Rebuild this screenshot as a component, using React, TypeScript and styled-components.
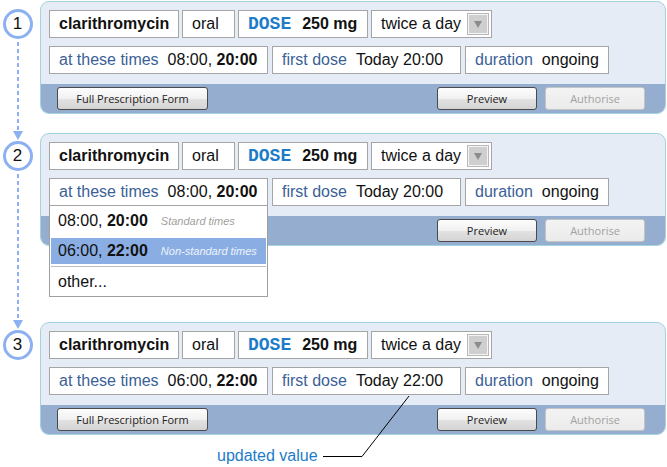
import React from 'react';
import styled, { createGlobalStyle } from 'styled-components';

const GlobalStyle = createGlobalStyle`
  html, body { margin: 0; padding: 0; background: #ffffff; }
  body { font-family: "Liberation Sans", Arial, sans-serif; color: #111111; }
`;

const BLUE_RAIL = '#8cb0f2';

const Page = styled.div`
  width: 667px;
  height: 467px;
  box-sizing: border-box;
  padding: 1px 1px 0 2px;
  display: flex;
  flex-direction: column;
  overflow: hidden;
`;

const Step = styled.section`
  display: flex;
  gap: 7px;
`;

const Rail = styled.div`
  width: 31px;
  flex: none;
  display: flex;
  flex-direction: column;
  align-items: center;
`;

const ArrowSeg = styled.div`
  height: 8px;
  width: 12px;
  flex: none;
  display: flex;
  justify-content: center;
  align-items: flex-end;
  overflow: visible;
`;

const ArrowSvg = styled.svg`
  display: block;
  margin-top: -3px;
  flex: none;
`;

const Circle = styled.div`
  width: 30px;
  height: 30px;
  flex: none;
  box-sizing: border-box;
  border: 3px solid ${BLUE_RAIL};
  border-radius: 50%;
  display: flex;
  align-items: center;
  justify-content: center;
  font-size: 17px;
  color: #111;
`;

const Connector = styled.div`
  flex: 1;
  width: 2px;
  margin-top: 3px;
  background: repeating-linear-gradient(to bottom, ${BLUE_RAIL} 0 4px, transparent 4px 7px);
`;

const Panel = styled.div<{ $after: number }>`
  width: 626px;
  box-sizing: border-box;
  border: 1px solid #a3d3e0;
  border-radius: 9px;
  background: #e5ecf6;
  display: flex;
  flex-direction: column;
  margin-bottom: ${(p) => p.$after}px;
  align-self: flex-start;
`;

const Body = styled.div`
  padding: 8px 8px 10px;
  display: flex;
  flex-direction: column;
  gap: 8px;
`;

const Row = styled.div<{ $gap: number }>`
  display: flex;
  gap: ${(p) => p.$gap}px;
`;

const Field = styled.div<{ $w: number }>`
  position: relative;
  width: ${(p) => p.$w}px;
  height: 28px;
  flex: none;
  box-sizing: border-box;
  background: #ffffff;
  border: 1px solid #a5a5a5;
  display: flex;
  align-items: center;
  padding: 0 9px;
  font-size: 16px;
  white-space: nowrap;
`;

const SelectField = styled(Field)`
  padding-right: 2px;
`;

const SelectBtn = styled.span`
  margin-left: auto;
  width: 22px;
  height: 22px;
  box-sizing: border-box;
  border: 1px solid #b8b8b8;
  box-shadow: inset 0 0 0 1px #f4f4f4;
  background: #cfcfcf;
  display: flex;
  align-items: center;
  justify-content: center;
`;

const Caret = styled.span`
  width: 0;
  height: 0;
  border-left: 4px solid transparent;
  border-right: 4px solid transparent;
  border-top: 7px solid #8c8c8c;
  margin-top: 1px;
`;

const Label = styled.span`
  color: #3b5f97;
  margin-right: 9px;
`;

const Dose = styled.span`
  font-family: "Liberation Mono", "Courier New", monospace;
  font-weight: bold;
  font-size: 18px;
  color: #1c7cc9;
  margin-right: 11px;
`;

const Strong = styled.b`
  font-weight: bold;
`;

const Bar = styled.div`
  height: 29px;
  background: #95adcf;
  border-radius: 0 0 8px 8px;
  display: flex;
  align-items: center;
  gap: 8px;
  padding: 0 20px 0 16px;
`;

const Btn = styled.button<{ $w: number; $push?: boolean }>`
  width: ${(p) => p.$w}px;
  height: 23px;
  box-sizing: border-box;
  padding: 0;
  margin-left: ${(p) => (p.$push ? 'auto' : '0')};
  border: 1px solid #4a4a4a;
  border-radius: 3px;
  background: linear-gradient(#fdfdfd, #f1f1f1 50%, #e2e2e2 52%, #d4d4d4);
  font-family: "Open Sans", "DejaVu Sans", sans-serif;
  font-size: 11px;
  color: #222;
  cursor: pointer;

  &:disabled {
    border-color: #c4c4c4;
    background: linear-gradient(#f3f3f3, #ebebeb);
    color: #a2a2a2;
    cursor: default;
  }
`;

const Menu = styled.div`
  position: absolute;
  z-index: 5;
  left: -1px;
  right: -1px;
  top: calc(100% + 1px);
  box-sizing: border-box;
  background: #ffffff;
  border: 1px solid #9f9f9f;
  border-top: none;
  padding: 0 1px;
  display: flex;
  flex-direction: column;
`;

const MenuItem = styled.div<{ $h: number; $active?: boolean }>`
  height: ${(p) => p.$h}px;
  display: flex;
  align-items: center;
  padding-left: 7px;
  font-size: 16px;
  background: ${(p) => (p.$active ? '#8aaee4' : 'transparent')};
  margin-top: ${(p) => (p.$active ? '2px' : '0')};
`;

const Hint = styled.i<{ $active?: boolean }>`
  font-size: 11px;
  margin-left: 13px;
  color: ${(p) => (p.$active ? '#eef3fb' : '#a0a0a0')};
`;

const Separator = styled.div`
  height: 1px;
  background: #bdbdbd;
  margin-top: 2px;
`;

const Note = styled.div`
  position: relative;
  margin-top: 12px;
  height: 18px;
  padding-left: 215px;
  display: flex;
  align-items: center;
`;

const NoteText = styled.span`
  color: #1c7cc9;
  font-size: 16px;
`;

const Callout = styled.svg`
  position: absolute;
  left: 321px;
  top: -52px;
  overflow: visible;
`;

type StepData = {
  n: number;
  times: [string, string];
  firstDose: string;
  open?: boolean;
  after: number;
  incoming: boolean;
  outgoing: boolean;
};

const steps: StepData[] = [
  { n: 1, times: ['08:00', '20:00'], firstDose: 'Today 20:00', after: 19, incoming: false, outgoing: true },
  { n: 2, times: ['08:00', '20:00'], firstDose: 'Today 20:00', open: true, after: 76, incoming: true, outgoing: true },
  { n: 3, times: ['06:00', '22:00'], firstDose: 'Today 22:00', after: 0, incoming: true, outgoing: false },
];

const Times = ({ t }: { t: [string, string] }) => (
  <span>
    {t[0]}, <Strong>{t[1]}</Strong>
  </span>
);

const TimesMenu = () => (
  <Menu>
    <MenuItem $h={30}>
      <Times t={['08:00', '20:00']} />
      <Hint>Standard times</Hint>
    </MenuItem>
    <MenuItem $h={26} $active>
      <Times t={['06:00', '22:00']} />
      <Hint $active>Non-standard times</Hint>
    </MenuItem>
    <Separator />
    <MenuItem $h={29}>other...</MenuItem>
  </Menu>
);

const StepRow = ({ s }: { s: StepData }) => (
  <Step>
    <Rail>
      <ArrowSeg>
        {s.incoming && (
          <ArrowSvg width="12" height="11" viewBox="0 0 12 11">
            <path d="M1 1 L11 1 L6 10 Z" fill={BLUE_RAIL} />
          </ArrowSvg>
        )}
      </ArrowSeg>
      <Circle>{s.n}</Circle>
      {s.outgoing && <Connector />}
    </Rail>
    <Panel $after={s.after}>
      <Body>
        <Row $gap={3}>
          <Field $w={130}>
            <Strong>clarithromycin</Strong>
          </Field>
          <Field $w={53}>oral</Field>
          <Field $w={130}>
            <Dose>DOSE</Dose>
            <Strong>250 mg</Strong>
          </Field>
          <SelectField $w={121}>
            twice a day
            <SelectBtn>
              <Caret />
            </SelectBtn>
          </SelectField>
        </Row>
        <Row $gap={4}>
          <Field $w={219}>
            <Label>at these times</Label>
            <Times t={s.times} />
            {s.open && <TimesMenu />}
          </Field>
          <Field $w={189}>
            <Label>first dose</Label>
            {s.firstDose}
          </Field>
          <Field $w={144}>
            <Label>duration</Label>
            ongoing
          </Field>
        </Row>
      </Body>
      <Bar>
        <Btn $w={151}>Full Prescription Form</Btn>
        <Btn $w={100} $push>
          Preview
        </Btn>
        <Btn $w={100} disabled>
          Authorise
        </Btn>
      </Bar>
    </Panel>
  </Step>
);

export default function App() {
  return (
    <>
      <GlobalStyle />
      <Page>
        {steps.map((s) => (
          <StepRow key={s.n} s={s} />
        ))}
        <Note>
          <NoteText>updated value</NoteText>
          <Callout width="90" height="63" viewBox="0 0 90 63">
            <path d="M0 61.5 H39 L86 1" fill="none" stroke="#000" strokeWidth="1" />
          </Callout>
        </Note>
      </Page>
    </>
  );
}
